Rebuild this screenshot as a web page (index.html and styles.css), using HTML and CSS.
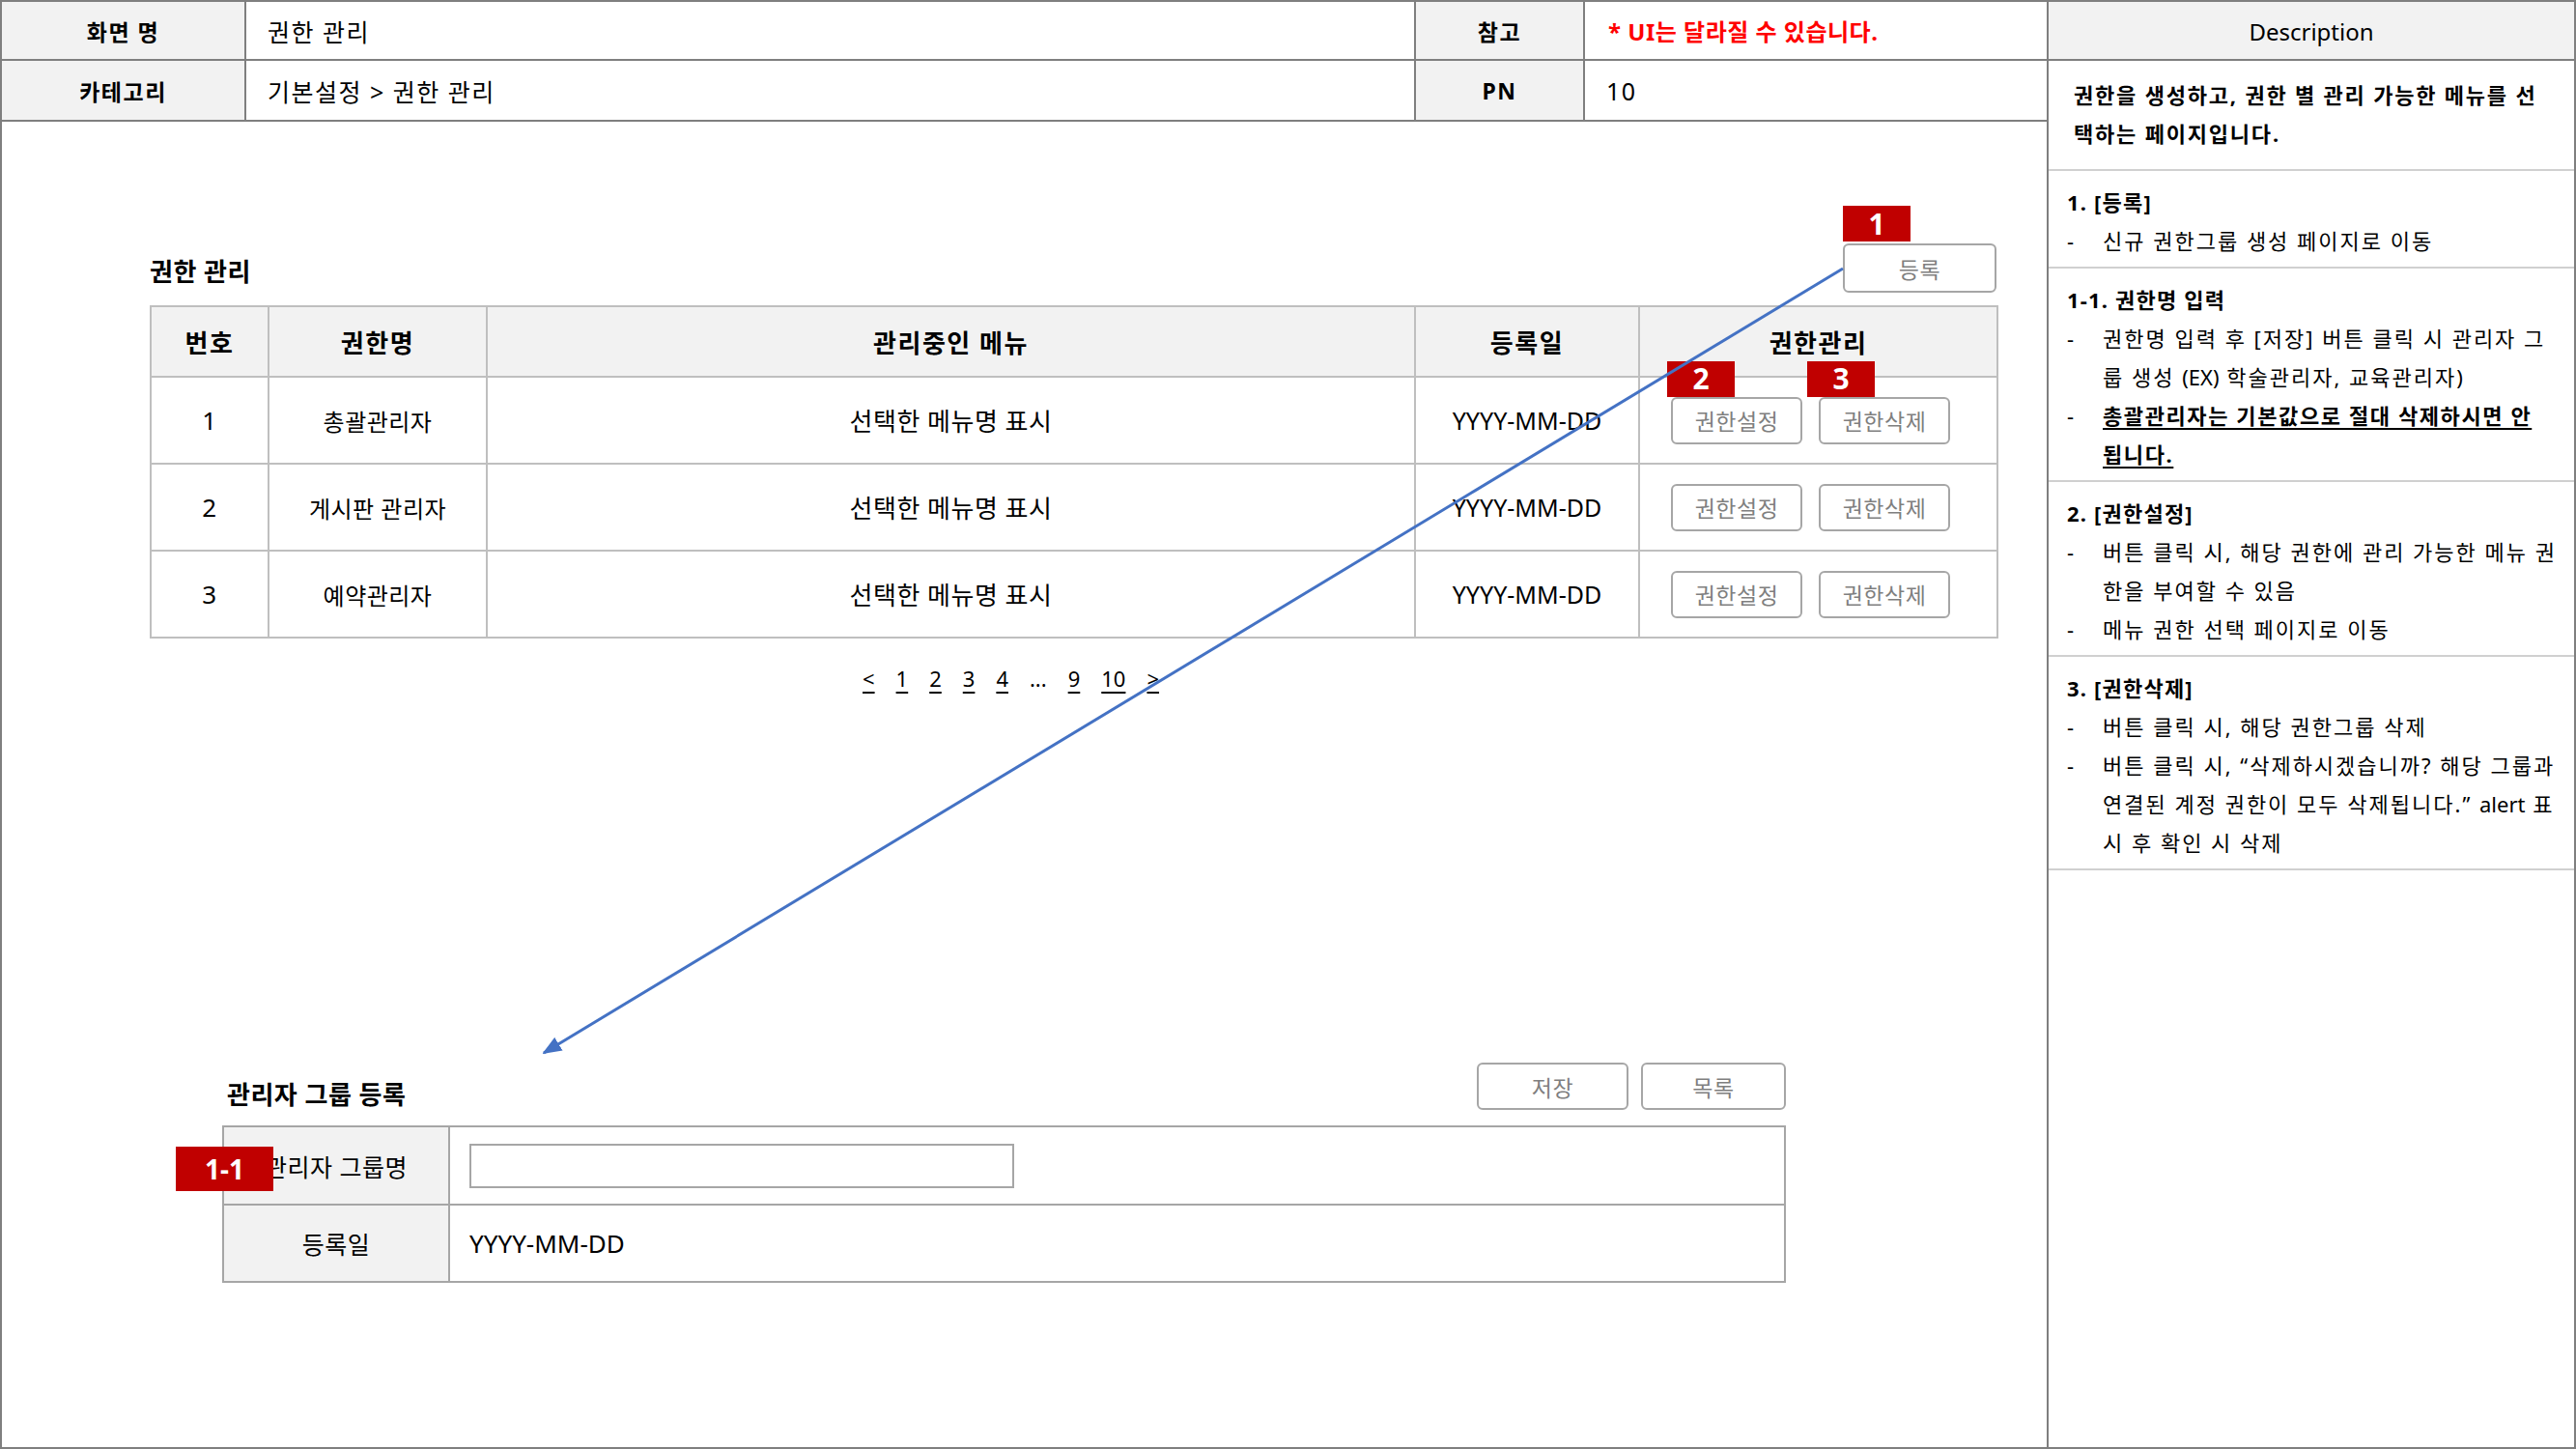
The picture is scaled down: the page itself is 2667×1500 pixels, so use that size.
FILE: index.html
```html
<!DOCTYPE html>
<html lang="ko">
<head>
<meta charset="utf-8">
<title>권한 관리</title>
<link rel="stylesheet" href="styles.css">
</head>
<body>
<div class="page">
  <div class="main">
    <div class="meta">
      <div class="m-label">화면 명</div>
      <div class="m-value">권한 관리</div>
      <div class="m-label">참고</div>
      <div class="m-value m-note">* UI는 달라질 수 있습니다.</div>
      <div class="m-label">카테고리</div>
      <div class="m-value">기본설정 &gt; 권한 관리</div>
      <div class="m-label">PN</div>
      <div class="m-value">10</div>
    </div>

    <div class="canvas">
      <section class="list">
        <div class="list-head">
          <h2 class="title">권한 관리</h2>
          <div class="btn btn-reg"><span class="badge badge-1">1</span>등록</div>
        </div>
        <table class="grid">
          <colgroup>
            <col class="c-no"><col class="c-name"><col class="c-menu"><col class="c-date"><col class="c-act">
          </colgroup>
          <thead>
            <tr><th>번호</th><th>권한명</th><th>관리중인 메뉴</th><th>등록일</th><th>권한관리</th></tr>
          </thead>
          <tbody>
            <tr>
              <td>1</td><td class="t-name">총괄관리자</td><td>선택한 메뉴명 표시</td><td class="t-date">YYYY-MM-DD</td>
              <td><div class="acts">
                <div class="btn btn-sm"><span class="badge badge-2">2</span>권한설정</div>
                <div class="btn btn-sm"><span class="badge badge-3">3</span>권한삭제</div>
              </div></td>
            </tr>
            <tr>
              <td>2</td><td class="t-name">게시판 관리자</td><td>선택한 메뉴명 표시</td><td class="t-date">YYYY-MM-DD</td>
              <td><div class="acts">
                <div class="btn btn-sm">권한설정</div>
                <div class="btn btn-sm">권한삭제</div>
              </div></td>
            </tr>
            <tr>
              <td>3</td><td class="t-name">예약관리자</td><td>선택한 메뉴명 표시</td><td class="t-date">YYYY-MM-DD</td>
              <td><div class="acts">
                <div class="btn btn-sm">권한설정</div>
                <div class="btn btn-sm">권한삭제</div>
              </div></td>
            </tr>
          </tbody>
        </table>
        <nav class="pager">
          <span class="pg">&lt;</span>
          <span class="pg">1</span>
          <span class="pg">2</span>
          <span class="pg">3</span>
          <span class="pg">4</span>
          <span class="pg-dots">...</span>
          <span class="pg">9</span>
          <span class="pg">10</span>
          <span class="pg">&gt;</span>
        </nav>
      </section>

      <section class="group">
        <div class="group-head">
          <h2 class="title group-title">관리자 그룹 등록</h2>
          <div class="group-btns">
            <div class="btn btn-save">저장</div>
            <div class="btn btn-listb">목록</div>
          </div>
        </div>
        <table class="form">
          <colgroup><col class="f-label-col"><col></colgroup>
          <tr class="f-row1">
            <th class="f-label"><span class="badge badge-11">1-1</span>관리자 그룹명</th>
            <td class="f-value"><div class="f-input"></div></td>
          </tr>
          <tr class="f-row2">
            <th class="f-label">등록일</th>
            <td class="f-value">YYYY-MM-DD</td>
          </tr>
        </table>
      </section>
    </div>
  </div>

  <aside class="desc">
    <div class="d-head">Description</div>
    <div class="d-intro">권한을 생성하고, 권한 별 관리 가능한 메뉴를 선<br>택하는 페이지입니다.</div>
    <div class="d-sec">
      <div class="d-title">1. [등록]</div>
      <div class="d-item"><span class="dash">-</span><span class="d-text">신규 권한그룹 생성 페이지로 이동</span></div>
    </div>
    <div class="d-sec">
      <div class="d-title">1-1. 권한명 입력</div>
      <div class="d-item"><span class="dash">-</span><span class="d-text">권한명 입력 후 [저장] 버튼 클릭 시 관리자 그<br>룹 생성 <span class="latin">(EX)</span> 학술관리자, 교육관리자)</span></div>
      <div class="d-item"><span class="dash">-</span><span class="d-text d-strong">총괄관리자는 기본값으로 절대 삭제하시면 안<br>됩니다.</span></div>
    </div>
    <div class="d-sec">
      <div class="d-title">2. [권한설정]</div>
      <div class="d-item"><span class="dash">-</span><span class="d-text">버튼 클릭 시, 해당 권한에 관리 가능한 메뉴 권<br>한을 부여할 수 있음</span></div>
      <div class="d-item"><span class="dash">-</span><span class="d-text">메뉴 권한 선택 페이지로 이동</span></div>
    </div>
    <div class="d-sec">
      <div class="d-title">3. [권한삭제]</div>
      <div class="d-item"><span class="dash">-</span><span class="d-text">버튼 클릭 시, 해당 권한그룹 삭제</span></div>
      <div class="d-item"><span class="dash">-</span><span class="d-text">버튼 클릭 시, “삭제하시겠습니까? 해당 그룹과<br>연결된 계정 권한이 모두 삭제됩니다.” <span class="latin">alert</span> 표<br>시 후 확인 시 삭제</span></div>
    </div>
  </aside>

  <svg class="arrow" width="2667" height="1500" viewBox="0 0 2667 1500">
    <defs>
      <marker id="ah" markerUnits="userSpaceOnUse" markerWidth="20" markerHeight="16" refX="18" refY="8" orient="auto">
        <path d="M0,0 L20,8 L0,16 Z" fill="#4472c4"/>
      </marker>
    </defs>
    <line x1="1908" y1="276" x2="563" y2="1088" stroke="#4472c4" stroke-width="3" marker-end="url(#ah)"/>
  </svg>
</div>
</body>
</html>
```

FILE: styles.css
```css
* { box-sizing: border-box; }

html, body {
  margin: 0;
  padding: 0;
  background: #fff;
}

body {
  font-family: "Noto Sans", "Noto Sans CJK KR", sans-serif;
  color: #000;
}

.page {
  position: relative;
  display: flex;
  width: 2667px;
  height: 1500px;
  border-top: 2px solid #7f7f7f;
  border-bottom: 2px solid #7f7f7f;
  overflow: hidden;
}

/* ---------- left main area ---------- */
.main {
  width: 2119px;
  flex: none;
  border-left: 2px solid #7f7f7f;
  display: flex;
  flex-direction: column;
}

.meta {
  display: grid;
  grid-template-columns: 253px 1211px 175px 478px;
  grid-template-rows: 61px 63px;
}

.m-label,
.m-value {
  display: flex;
  align-items: center;
  border-bottom: 2px solid #7f7f7f;
  border-right: 2px solid #7f7f7f;
  font-size: 25px;
  letter-spacing: 1.5px;
}

.m-value:nth-child(4n) { border-right: none; }

.m-label {
  justify-content: center;
  background: #f2f2f2;
  font-weight: 700;
  font-size: 23px;
  letter-spacing: 1.5px;
}

.m-value { padding-left: 22px; }

.m-note {
  color: #ff0000;
  font-weight: 700;
  font-size: 24px;
  letter-spacing: 0.5px;
  padding-left: 24px;
}

.canvas {
  flex: 1;
  padding-top: 126px;
}

.title {
  margin: 0;
  font-size: 26px;
  font-weight: 700;
  line-height: 38px;
  letter-spacing: 0.5px;
}

.btn {
  position: relative;
  display: flex;
  align-items: center;
  justify-content: center;
  border: 2px solid #a6a6a6;
  border-radius: 6px;
  background: #fff;
  color: #7f7f7f;
  font-size: 23px;
  letter-spacing: 0.5px;
}

.badge {
  position: absolute;
  display: flex;
  align-items: center;
  justify-content: center;
  background: #c00000;
  color: #fff;
  font-weight: 700;
  font-size: 30px;
  line-height: 1;
  letter-spacing: 0;
}

/* list section */
.list {
  margin-left: 153px;
  width: 1912px;
}

.list-head {
  display: flex;
  justify-content: space-between;
  align-items: flex-end;
  height: 51px;
  margin-bottom: 13px;
}

.list-head .title { margin-bottom: 3px; }

.btn-reg {
  width: 159px;
  height: 51px;
}

.badge-1 {
  width: 70px;
  height: 37px;
  left: -2px;
  top: -41px;
}

.grid {
  width: 1912px;
  border-collapse: collapse;
  table-layout: fixed;
  font-size: 26px;
}

.c-no { width: 122px; }
.c-name { width: 226px; }
.c-menu { width: 961px; }
.c-date { width: 232px; }
.c-act { width: 371px; }

.grid th,
.grid td {
  border: 2px solid #bfbfbf;
  text-align: center;
  padding: 0;
}

.grid th {
  height: 73px;
  background: #f2f2f2;
  font-weight: 700;
  font-size: 26px;
  letter-spacing: 1.5px;
}

.grid td {
  height: 90px;
  letter-spacing: 0.5px;
}

.grid .t-name { font-size: 24px; letter-spacing: 0.5px; }
.grid .t-date { font-size: 25px; letter-spacing: 0; }

.acts {
  display: flex;
  justify-content: center;
  gap: 17px;
  padding-right: 16px;
}

.btn-sm {
  width: 136px;
  height: 49px;
}

.badge-2 {
  width: 70px;
  height: 37px;
  left: -6px;
  top: -39px;
}

.badge-3 {
  width: 70px;
  height: 37px;
  left: -14px;
  top: -39px;
}

.pager {
  display: flex;
  gap: 22px;
  margin-top: 26px;
  padding-left: 738px;
  font-size: 22px;
  line-height: 30px;
}

.pg {
  text-decoration: underline;
  text-underline-offset: 5px;
}

/* group section */
.group {
  margin-left: 228px;
  width: 1619px;
  margin-top: 383px;
}

.group-head {
  display: flex;
  justify-content: space-between;
  align-items: flex-end;
  height: 49px;
}

.group-title { margin-left: 5px; margin-bottom: -3px; }

.group-btns {
  display: flex;
  gap: 13px;
}

.btn-save {
  width: 157px;
  height: 49px;
}

.btn-listb {
  width: 150px;
  height: 49px;
}

.form {
  margin-top: 16px;
  width: 1619px;
  border-collapse: collapse;
  table-layout: fixed;
  font-size: 26px;
}

.f-label-col { width: 234px; }

.form th,
.form td {
  border: 2px solid #a6a6a6;
  padding: 0;
}

.f-row1 th, .f-row1 td { height: 81px; }
.f-row2 th, .f-row2 td { height: 80px; }

.f-label {
  position: relative;
  background: #f2f2f2;
  font-weight: 400;
  text-align: center;
  font-size: 25px;
  letter-spacing: 0.5px;
}

.f-value { padding-left: 20px !important; }

.f-input {
  width: 564px;
  height: 46px;
  border: 2px solid #a6a6a6;
}

.badge-11 {
  width: 101px;
  height: 46px;
  left: -50px;
  top: 20px;
  font-size: 28px;
}

/* ---------- description ---------- */
.desc {
  flex: 1;
  border-left: 2px solid #7f7f7f;
  border-right: 2px solid #7f7f7f;
  font-size: 22px;
  letter-spacing: 2px;
}

.d-head {
  height: 61px;
  display: flex;
  align-items: center;
  justify-content: center;
  background: #f2f2f2;
  border-bottom: 2px solid #7f7f7f;
  font-size: 24px;
  letter-spacing: 0;
  padding-top: 2px;
}

.d-intro {
  height: 114px;
  padding: 15px 0 0 26px;
  font-weight: 700;
  line-height: 40px;
  letter-spacing: 1.8px;
  border-bottom: 2px solid #d0d0d0;
  white-space: nowrap;
}

.d-sec {
  padding: 12px 0 7px 19px;
  border-bottom: 2px solid #d0d0d0;
  line-height: 40px;
  white-space: nowrap;
}

.d-title { font-weight: 700; letter-spacing: 1.2px; }

.d-item { display: flex; }

.dash {
  width: 37px;
  flex: none;
}

.latin { letter-spacing: 0; }

.d-strong {
  font-weight: 700;
  letter-spacing: 1.6px;
  text-decoration: underline;
  text-underline-offset: 4px;
}

/* ---------- overlay arrow ---------- */
.arrow {
  position: absolute;
  left: 0;
  top: 0;
  pointer-events: none;
}
```
